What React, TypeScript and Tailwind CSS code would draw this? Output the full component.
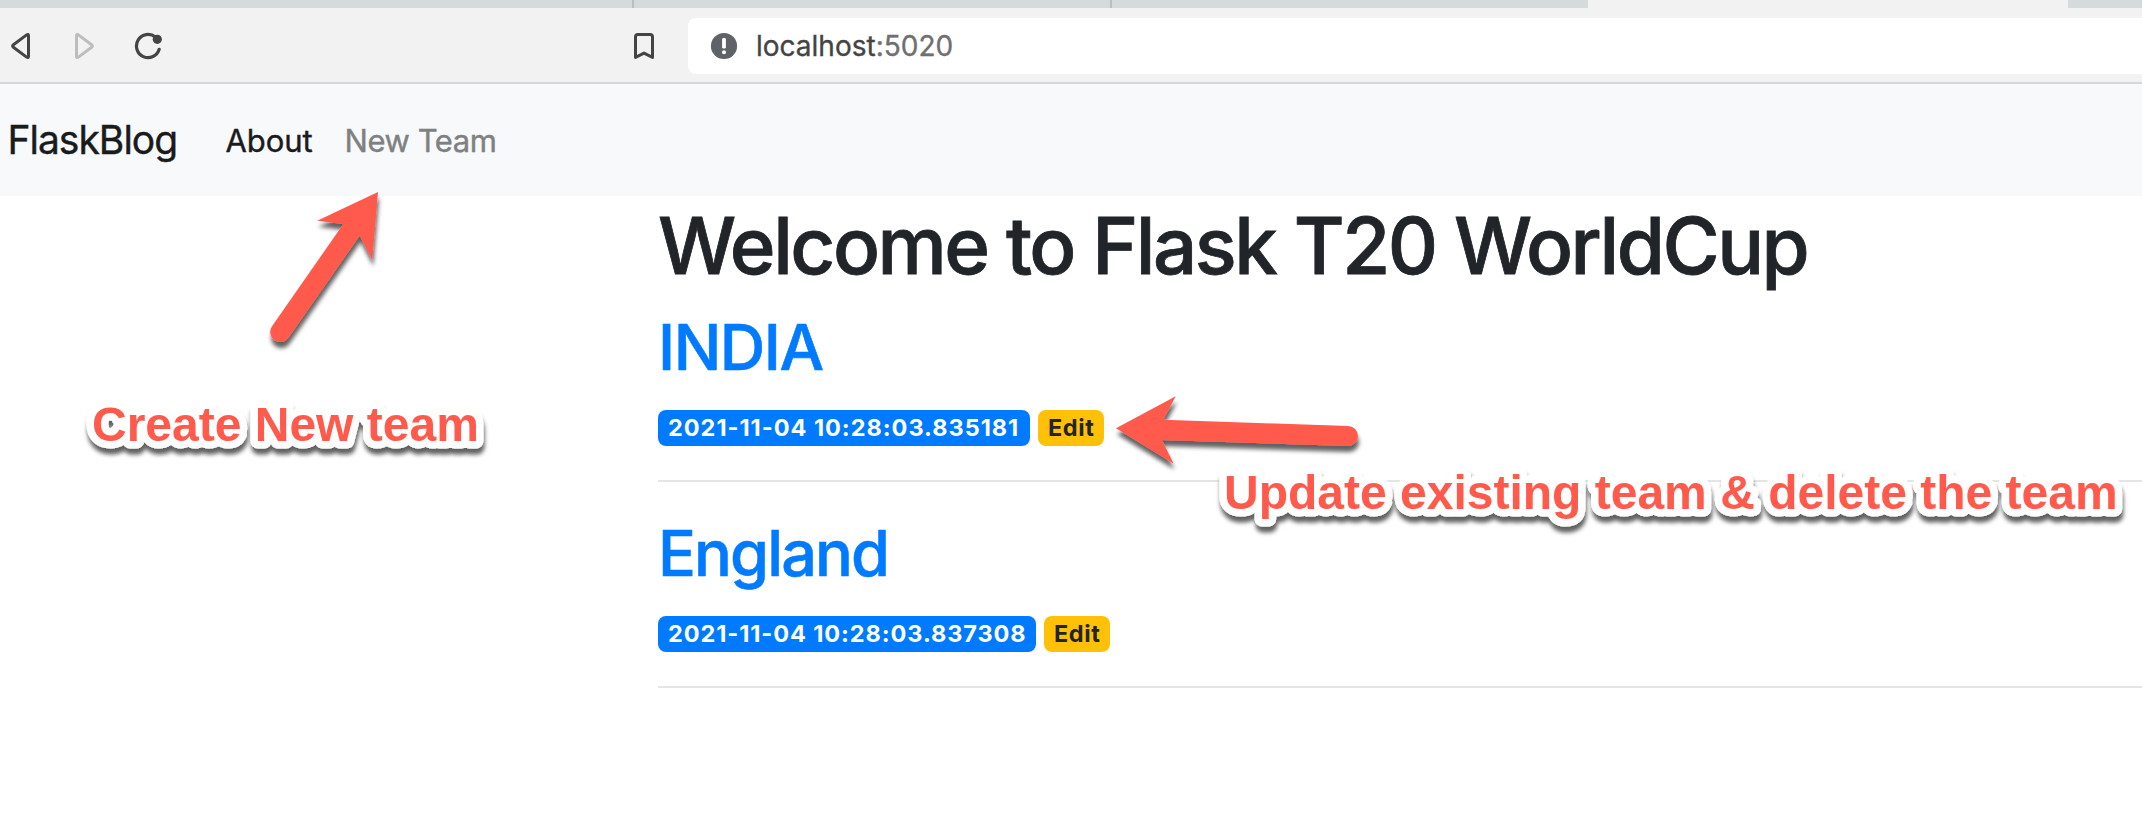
type Team = {
  name: string;
  nameClass: string;
  stamp: string;
  stampClass: string;
};

const teams: Team[] = [
  {
    name: "INDIA",
    nameClass: "tracking-[-1.5px]",
    stamp: "2021-11-04 10:28:03.835181",
    stampClass: "w-[372px] tracking-[0.98px]",
  },
  {
    name: "England",
    nameClass: "tracking-[-1.9px]",
    stamp: "2021-11-04 10:28:03.837308",
    stampClass: "w-[378px] tracking-[0.92px]",
  },
];

function TabStrip() {
  return (
    <div className="flex h-2 w-full bg-[#d5dadd]">
      <div className="w-[632px]" />
      <div className="w-0.5 bg-[#bbbfc1]" />
      <div className="w-[476px]" />
      <div className="w-0.5 bg-[#bbbfc1]" />
      <div className="w-[476px]" />
      <div className="w-[480px] bg-[#f2f2f2]" />
    </div>
  );
}

function Toolbar() {
  return (
    <div className="flex h-[76px] w-full items-start border-b-2 border-[#d5d8da] bg-[#f2f2f2] pt-[10px]">
      <div className="flex h-14 w-[688px] shrink-0 items-center pl-[10px]">
        <svg width="22" height="28" viewBox="0 0 22 28" fill="none" stroke="#444" strokeWidth="3" strokeLinejoin="round">
          <path d="M16.6 2.9 Q18.5 1.6 18.5 3.8 V24.2 Q18.5 26.4 16.6 25.1 L3.4 15.3 Q1.8 14 3.4 12.7 Z" />
        </svg>
        <svg className="ml-[42px]" width="22" height="28" viewBox="0 0 22 28" fill="none" stroke="#bdbdbd" strokeWidth="3" strokeLinejoin="round">
          <path d="M4.4 2.9 Q2.5 1.6 2.5 3.8 V24.2 Q2.5 26.4 4.4 25.1 L17.6 15.3 Q19.2 14 17.6 12.7 Z" />
        </svg>
        <svg className="ml-[38px]" width="30" height="28" viewBox="0 0 30 28" fill="none">
          <path d="M21.4 5 A11.6 11.6 0 1 0 25.2 17.3" stroke="#444" strokeWidth="3.2" strokeLinecap="round" />
          <circle cx="23.3" cy="7.3" r="4.6" fill="#444" />
        </svg>
        <svg className="ml-[469px]" width="22" height="28" viewBox="0 0 22 28" fill="none" stroke="#444" strokeWidth="3" strokeLinejoin="round" strokeLinecap="round">
          <path d="M2.5 25.4 V4.9 Q2.5 2.5 4.9 2.5 H17.1 Q19.5 2.5 19.5 4.9 V25.4 L11 21.1 Z" />
        </svg>
      </div>
      <div className="flex h-14 flex-1 items-center rounded-l-lg bg-white pl-[22px]">
        <svg width="28" height="28" viewBox="0 0 28 28">
          <circle cx="14" cy="14" r="13.1" fill="#5f6368" />
          <rect x="12.1" y="6" width="3.8" height="10.6" rx="1.4" fill="#fff" />
          <circle cx="14" cy="20.3" r="2" fill="#fff" />
        </svg>
        <span className="ml-[18px] text-[28px] leading-9 text-[#444] [-webkit-text-stroke-width:0.35px]">
          localhost<span className="text-[#6f6f6f]">:5020</span>
        </span>
      </div>
    </div>
  );
}

function Navbar() {
  return (
    <nav className="flex h-28 w-full items-center bg-[#f8f9fb] pl-[7.5px] [-webkit-text-stroke-width:0.4px]">
      <a className="w-[218px] text-[39px] leading-[60px] tracking-[-1px] text-[#1a1b1c]">FlaskBlog</a>
      <a className="w-[119px] pt-0.5 text-[31px] leading-[48px] tracking-[-0.1px] text-[#1a1b1c]">About</a>
      <a className="pt-0.5 text-[31px] leading-[48px] tracking-[-0.45px] text-[#7f8081]">New Team</a>
    </nav>
  );
}

function TeamEntry({ team }: { team: Team }) {
  return (
    <article>
      <h2 className={`text-[63px] leading-[76px] font-medium text-[#007bff] [-webkit-text-stroke-width:0.6px] ${team.nameClass}`}>
        {team.name}
      </h2>
      <div className="mt-[25px] flex gap-2 text-[23.5px] leading-9 font-bold whitespace-nowrap">
        <span className={`h-9 rounded-lg bg-[#007bff] pl-[10px] text-white ${team.stampClass}`}>{team.stamp}</span>
        <a className="h-9 w-[66px] rounded-lg bg-[#ffc107] pl-[10px] tracking-[0.6px] text-[#212529]">Edit</a>
      </div>
      <hr className="mt-[34px] h-0.5 border-0 bg-[#e5e5e5]" />
    </article>
  );
}

function Annotations() {
  return (
    <svg className="pointer-events-none absolute inset-0" width="2142" height="814" viewBox="0 0 2142 814">
      <defs>
        <filter id="drop" filterUnits="userSpaceOnUse" x="0" y="0" width="2142" height="814">
          <feDropShadow dx="1" dy="6" stdDeviation="2.2" floodColor="#000" floodOpacity="0.62" />
        </filter>
      </defs>
      <g fill="#ff5a4c" filter="url(#drop)">
        <path d="M378 192 L317.2 220.7 L343.3 224 L272.2 326 A9.9 9.9 0 0 0 288.3 338 L359.7 235.7 L372.3 260 Z" />
        <path d="M1116 428.3 L1175.7 396.3 L1163.3 419.7 L1348 426 A10 10 0 0 1 1348 446 L1162 440 L1173.5 463.5 Z" />
      </g>
      <g
        className="font-['Liberation_Sans',Arial,sans-serif] text-[48px] font-bold"
        fill="#ff5a4c"
        stroke="#fff"
        strokeWidth="15"
        strokeLinejoin="round"
        paintOrder="stroke"
        filter="url(#drop)"
      >
        <text x="92" y="441">Create New team</text>
        <text x="1224" y="509">Update existing team &amp; delete the team</text>
      </g>
    </svg>
  );
}

export default function App() {
  return (
    <div className="relative h-[814px] w-full overflow-hidden bg-white font-['Inter',sans-serif]">
      <TabStrip />
      <Toolbar />
      <Navbar />
      <main className="flex flex-col pt-0.5 pl-[658px]">
        <h1 className="text-[78px] leading-[96px] font-medium tracking-[-2.47px] text-[#212529] [-webkit-text-stroke-width:0.8px]">
          Welcome to Flask T20 WorldCup
        </h1>
        <div className="mt-[15px] flex flex-col gap-[33px]">
          {teams.map((team) => (
            <TeamEntry key={team.name} team={team} />
          ))}
        </div>
      </main>
      <Annotations />
    </div>
  );
}
